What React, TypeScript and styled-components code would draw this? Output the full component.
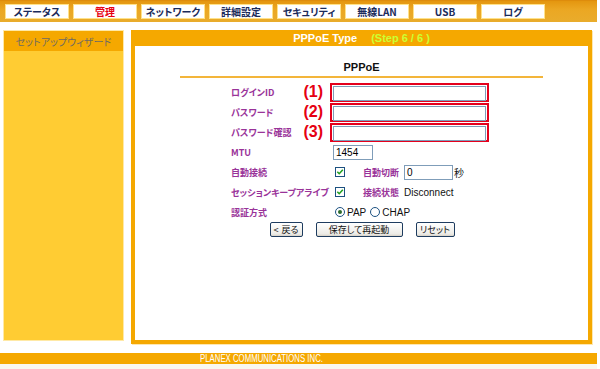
import React from 'react';
import styled, { createGlobalStyle } from 'styled-components';

const GlobalStyle = createGlobalStyle`
  html, body {
    margin: 0;
    padding: 0;
    background: #fff;
  }
  body {
    font-family: "Noto Sans CJK JP", "Liberation Sans", sans-serif;
    font-feature-settings: "palt";
  }
`;

const Page = styled.div`
  width: 597px;
  height: 369px;
  display: flex;
  flex-direction: column;
  background: #fff;
  overflow: hidden;
`;

const TopBar = styled.div`
  height: 22px;
  box-sizing: border-box;
  padding: 4px 0 0 5px;
  display: flex;
  gap: 4px;
  background: linear-gradient(180deg, #e4960f 0%, #eba723 40%, #e9ac2c 100%);
  border-top: 1px solid #de8c0c;
`;

const Tab = styled.div<{ $active?: boolean }>`
  width: 64px;
  height: 15px;
  box-sizing: border-box;
  margin-top: -1px;
  background: #fff;
  border: 1px solid #ffe28a;
  display: flex;
  align-items: center;
  justify-content: center;
  font-size: 10px;
  font-weight: bold;
  line-height: 1;
  color: ${p => (p.$active ? '#e60012' : '#1b2b5a')};
`;

const Body = styled.div`
  display: flex;
  align-items: flex-start;
  gap: 7px;
  padding: 8px 0 0 3px;
`;

const Sidebar = styled.div`
  width: 121px;
  height: 311px;
  box-sizing: border-box;
  display: flex;
  flex-direction: column;
  border: 1px solid #ffe9a6;
  background: #ffcc33;
`;

const SideHead = styled.div`
  height: 20px;
  background: #f5a800;
  display: flex;
  align-items: center;
  justify-content: center;
  font-size: 10px;
  color: #6e6a62;
`;

const Main = styled.div`
  width: 461px;
  height: 314px;
  box-sizing: border-box;
  padding: 0 4px 4px;
  background: #f5a800;
  display: flex;
  flex-direction: column;
  box-shadow: 1px 1px 0 #fde7b0;
`;

const MainHead = styled.div`
  height: 16px;
  display: flex;
  align-items: center;
  justify-content: center;
  gap: 14px;
  font-family: "Liberation Sans", Arial, sans-serif;
  font-size: 11px;
  font-weight: bold;
  color: #fff;
`;

const Step = styled.span`
  color: #ccff33;
`;

const Content = styled.div`
  flex: 1;
  background: #fff;
  display: flex;
  flex-direction: column;
`;

const Title = styled.div`
  margin-top: 14px;
  height: 14px;
  line-height: 14px;
  text-align: center;
  font-family: "Liberation Sans", Arial, sans-serif;
  font-size: 11px;
  font-weight: bold;
  color: #111;
`;

const Rule = styled.div`
  margin: 2px auto 0;
  width: 363px;
  height: 2px;
  background: #f3b53a;
`;

const FormGrid = styled.div`
  margin: 4px 0 0 96px;
  display: grid;
  grid-template-columns: 99px auto;
  grid-auto-rows: 20px;
  align-items: center;
`;

const Label = styled.div`
  display: flex;
  align-items: center;
  justify-content: space-between;
  padding-right: 7px;
  font-size: 9px;
  font-weight: bold;
  color: #993399;
  white-space: nowrap;
`;

const Marker = styled.span`
  font-family: "Liberation Sans", Arial, sans-serif;
  font-size: 16px;
  font-weight: bold;
  color: #e60012;
  line-height: 1;
`;

const Field = styled.div`
  display: flex;
  align-items: center;
  padding-left: 3px;
  font-size: 9px;
  white-space: nowrap;
`;

const RedBox = styled.div`
  width: 159px;
  height: 19px;
  box-sizing: border-box;
  border: 2px solid #e4001c;
  padding: 1px;
  margin-left: -3px;
`;

const TextInput = styled.div<{ $w?: number }>`
  width: ${p => (p.$w ? `${p.$w}px` : '100%')};
  height: 15px;
  box-sizing: border-box;
  border: 1px solid #7f9db9;
  background: #fff;
  padding: 0 2px;
  font-family: "Liberation Sans", Arial, sans-serif;
  font-size: 10px;
  line-height: 13px;
  color: #000;
`;

const CheckSlot = styled.div`
  width: 28px;
  display: flex;
  align-items: center;
  padding-left: 2px;
`;

const RadioGroup = styled.div`
  display: flex;
  align-items: center;
  padding-left: 2px;
`;

const SubLabel = styled.span`
  width: 41px;
  font-weight: bold;
  color: #993399;
`;

const Plain = styled.span`
  font-family: "Liberation Sans", Arial, sans-serif;
  font-size: 10px;
  color: #111;
`;

const Unit = styled.span`
  margin-left: 1px;
  font-size: 10px;
  color: #111;
`;

const RadioLabel = styled.span`
  display: flex;
  align-items: center;
  gap: 2px;
  margin-right: 4px;
  font-family: "Liberation Sans", Arial, sans-serif;
  font-size: 10px;
  color: #111;
`;

const ButtonRow = styled.div`
  display: flex;
  justify-content: center;
  gap: 13px;
  padding-left: 1px;
`;

const Button = styled.div<{ $w: number }>`
  width: ${p => p.$w}px;
  height: 15px;
  box-sizing: border-box;
  border: 1px solid #1e3c5f;
  border-radius: 2px;
  background: linear-gradient(180deg, #ffffff 0%, #ecebe6 85%, #d6d0c5 100%);
  display: flex;
  align-items: center;
  justify-content: center;
  gap: 3px;
  font-size: 9px;
  color: #111;
`;

const Footer = styled.div`
  margin-top: 9px;
  height: 11px;
  background: #f5a800;
  padding-left: 200px;
  display: flex;
  align-items: center;
  overflow: hidden;
`;

const FooterText = styled.span`
  display: block;
  transform: scaleX(0.78);
  transform-origin: left center;
  font-family: "Liberation Sans", Arial, sans-serif;
  font-size: 10px;
  line-height: 11px;
  color: #fff;
  white-space: nowrap;
`;

const BottomStrip = styled.div`
  flex: 1;
  background: #f9f7f0;
`;

const CheckBox = () => (
  <svg width="10" height="10" viewBox="0 0 10 10">
    <rect x="0.5" y="0.5" width="9" height="9" fill="#fff" stroke="#1c5180" />
    <path d="M2.3 4.8 L4.2 6.7 L7.8 2.8" fill="none" stroke="#21a121" strokeWidth="1.6" />
  </svg>
);

const RadioIcon = ({ on }: { on?: boolean }) => (
  <svg width="10" height="10" viewBox="0 0 10 10">
    <circle cx="5" cy="5" r="4.5" fill="#fff" stroke="#1c5180" />
    {on && <circle cx="5" cy="5" r="2" fill="#2b6a2b" />}
  </svg>
);

const tabs = ['ステータス', '管理', 'ネットワーク', '詳細設定', 'セキュリティ', '無線LAN', 'USB', 'ログ'];

export default function App() {
  return (
    <Page>
      <GlobalStyle />
      <TopBar>
        {tabs.map(t => (
          <Tab key={t} $active={t === '管理'}>{t}</Tab>
        ))}
      </TopBar>
      <Body>
        <Sidebar>
          <SideHead>セットアップウィザード</SideHead>
        </Sidebar>
        <Main>
          <MainHead>
            <span>PPPoE Type</span>
            <Step>(Step 6 / 6 )</Step>
          </MainHead>
          <Content>
            <Title>PPPoE</Title>
            <Rule />
            <FormGrid>
              <Label>ログインID<Marker>(1)</Marker></Label>
              <Field><RedBox><TextInput /></RedBox></Field>

              <Label>パスワード<Marker>(2)</Marker></Label>
              <Field><RedBox><TextInput /></RedBox></Field>

              <Label>パスワード確認<Marker>(3)</Marker></Label>
              <Field><RedBox><TextInput /></RedBox></Field>

              <Label>MTU</Label>
              <Field><TextInput $w={40}>1454</TextInput></Field>

              <Label>自動接続</Label>
              <Field>
                <CheckSlot><CheckBox /></CheckSlot>
                <SubLabel>自動切断</SubLabel>
                <TextInput $w={49}>0</TextInput>
                <Unit>秒</Unit>
              </Field>

              <Label>セッションキープアライブ</Label>
              <Field>
                <CheckSlot><CheckBox /></CheckSlot>
                <SubLabel>接続状態</SubLabel>
                <Plain>Disconnect</Plain>
              </Field>

              <Label>認証方式</Label>
              <Field>
                <RadioGroup>
                  <RadioLabel><RadioIcon on />PAP</RadioLabel>
                  <RadioLabel><RadioIcon />CHAP</RadioLabel>
                </RadioGroup>
              </Field>
            </FormGrid>
            <ButtonRow>
              <Button $w={33}><span>&lt;</span><span>戻る</span></Button>
              <Button $w={87}>保存して再起動</Button>
              <Button $w={39}>リセット</Button>
            </ButtonRow>
          </Content>
        </Main>
      </Body>
      <Footer><FooterText>PLANEX COMMUNICATIONS INC.</FooterText></Footer>
      <BottomStrip />
    </Page>
  );
}
